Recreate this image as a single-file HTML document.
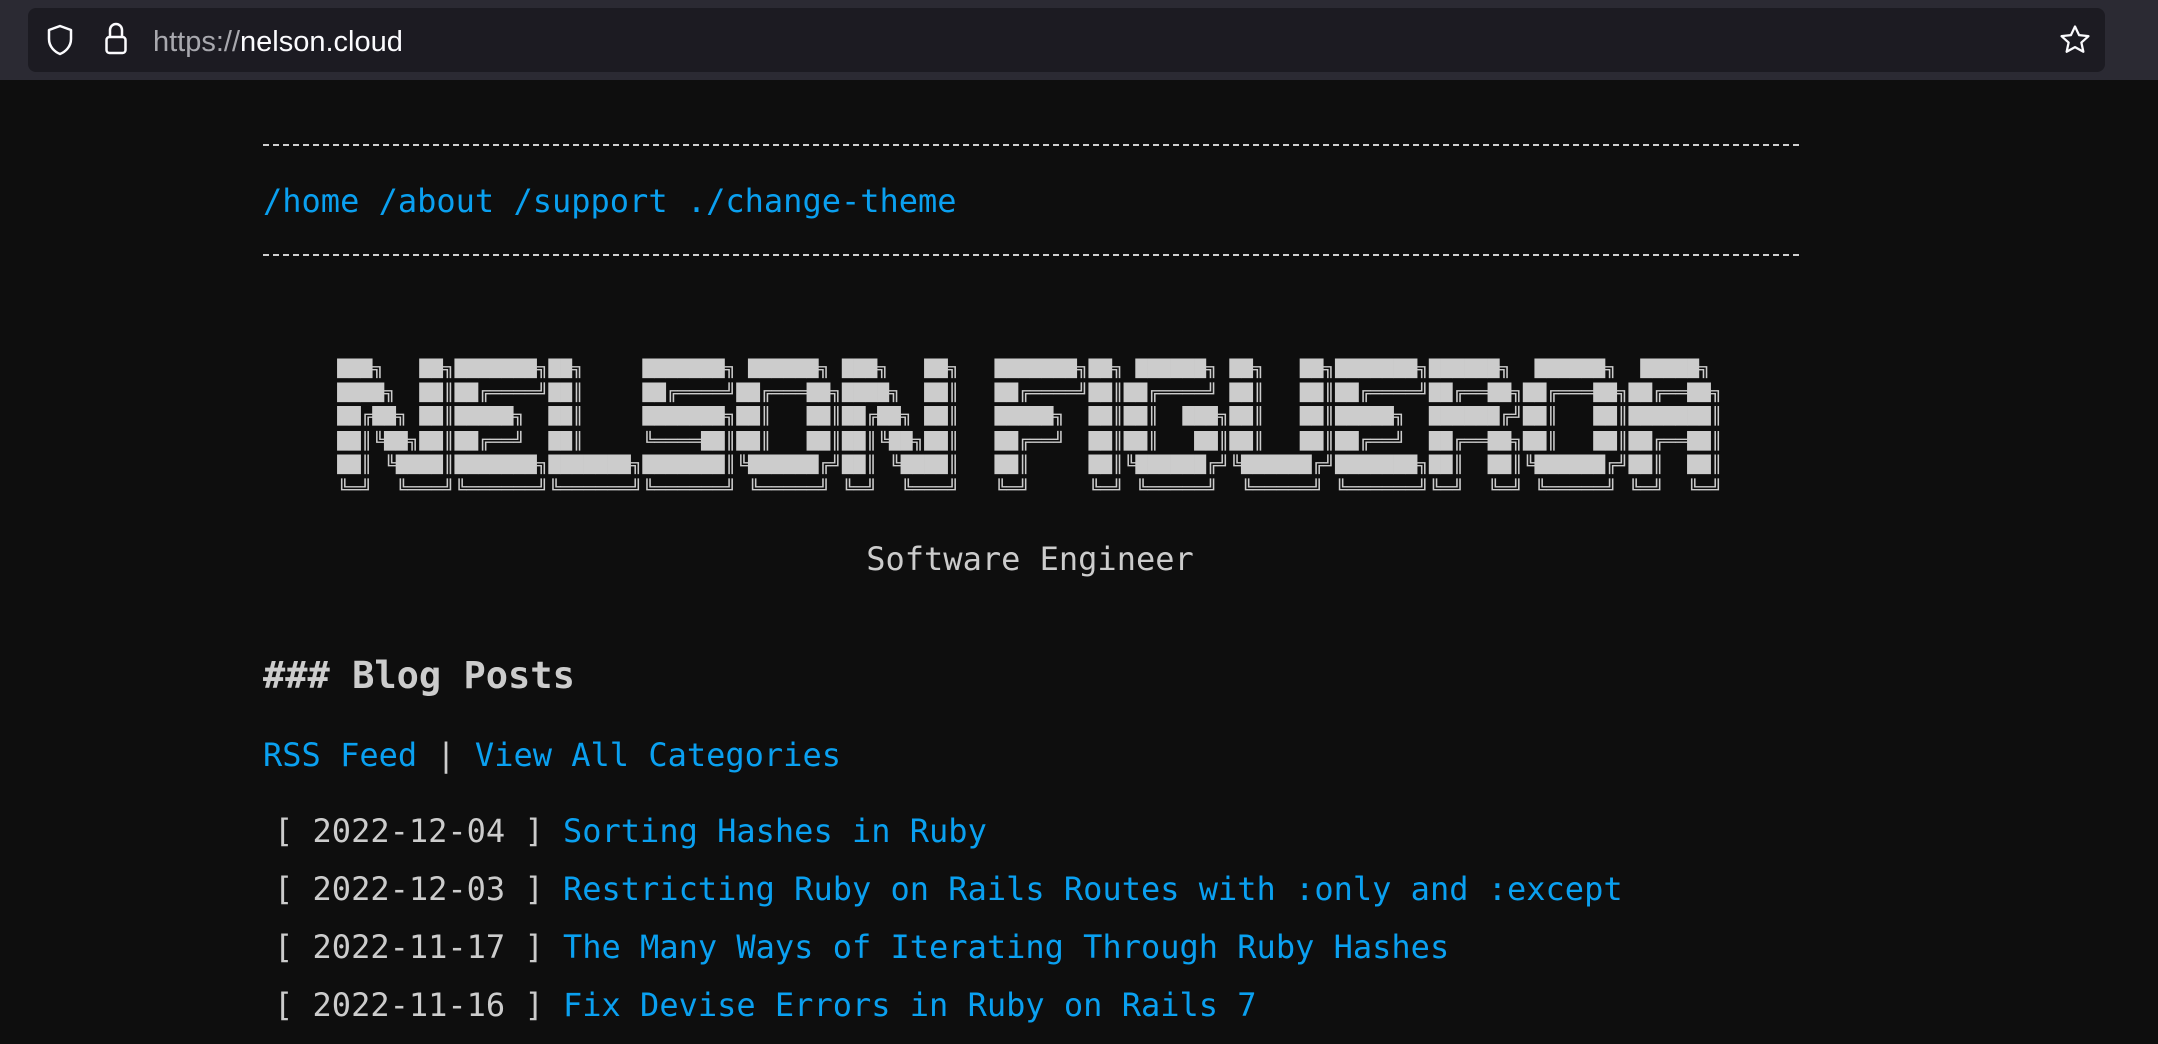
<!DOCTYPE html>
<html><head><meta charset="utf-8"><style>
html,body{margin:0;padding:0;width:2158px;height:1044px;overflow:hidden;background:#0e0e0e;font-family:"DejaVu Sans Mono","Liberation Mono",monospace;color:#cccccc}
.top{position:absolute;left:0;top:0;width:2158px;height:80px;background:#2b2a33}
.url{position:absolute;left:28px;top:8px;width:2077px;height:64px;background:#1c1b22;border-radius:8px}
.urltxt{position:absolute;left:125px;top:18px;font-family:"Liberation Sans",sans-serif;font-size:29px;color:#fbfbfe}
.urltxt span{color:#a8a8ae}
.dash{position:absolute;left:263px;width:1536px;border-top:2px dashed #cfcfcf}
.a{color:#0aa0f0}
.abs{position:absolute;font-size:32px;line-height:40px;white-space:pre}
pre.banner{position:absolute;left:0;width:2060px;text-align:center;top:357px;margin:0;font-family:"DejaVu Sans Mono",monospace;font-size:19.5px;line-height:28.2px;color:#cccccc;transform:scaleY(0.85);transform-origin:top}
</style></head><body>
<div class="top"><div class="url">
<svg style="position:absolute;left:17px;top:15px" width="30" height="34" viewBox="0 0 30 34"><path d="M15 3 L26 7 V16 C26 24 20 29 15 31 C10 29 4 24 4 16 V7 Z" fill="none" stroke="#fbfbfe" stroke-width="2.5" stroke-linejoin="round"/></svg>
<svg style="position:absolute;left:75px;top:12px" width="26" height="38" viewBox="0 0 26 38"><path d="M7 17 V10 A6 6 0 0 1 19 10 V17" fill="none" stroke="#fbfbfe" stroke-width="2.5"/><rect x="3.5" y="17" width="19" height="16" rx="3" fill="none" stroke="#fbfbfe" stroke-width="2.5"/></svg>
<div class="urltxt"><span>https://</span>nelson.cloud</div>
<svg style="position:absolute;left:2030px;top:15px" width="34" height="34" viewBox="0 0 24 24"><path d="M12 2.5 L14.9 8.6 L21.5 9.3 L16.5 13.8 L17.9 20.3 L12 17 L6.1 20.3 L7.5 13.8 L2.5 9.3 L9.1 8.6 Z" fill="none" stroke="#fbfbfe" stroke-width="1.6" stroke-linejoin="round"/></svg>
</div></div>
<div class="dash" style="top:144px"></div>
<div class="abs a" style="left:263px;top:181px">/home /about /support ./change-theme</div>
<div class="dash" style="top:254px"></div>
<pre class="banner">███╗   ██╗███████╗██╗     ███████╗ ██████╗ ███╗   ██╗   ███████╗██╗ ██████╗ ██╗   ██╗███████╗██████╗  ██████╗  █████╗ 
████╗  ██║██╔════╝██║     ██╔════╝██╔═══██╗████╗  ██║   ██╔════╝██║██╔════╝ ██║   ██║██╔════╝██╔══██╗██╔═══██╗██╔══██╗
██╔██╗ ██║█████╗  ██║     ███████╗██║   ██║██╔██╗ ██║   █████╗  ██║██║  ███╗██║   ██║█████╗  ██████╔╝██║   ██║███████║
██║╚██╗██║██╔══╝  ██║     ╚════██║██║   ██║██║╚██╗██║   ██╔══╝  ██║██║   ██║██║   ██║██╔══╝  ██╔══██╗██║   ██║██╔══██║
██║ ╚████║███████╗███████╗███████║╚██████╔╝██║ ╚████║   ██║     ██║╚██████╔╝╚██████╔╝███████╗██║  ██║╚██████╔╝██║  ██║
╚═╝  ╚═══╝╚══════╝╚══════╝╚══════╝ ╚═════╝ ╚═╝  ╚═══╝   ╚═╝     ╚═╝ ╚═════╝  ╚═════╝ ╚══════╝╚═╝  ╚═╝ ╚═════╝ ╚═╝  ╚═╝</pre>
<div class="abs" style="left:0;width:2060px;text-align:center;top:539px">Software Engineer</div>
<div class="abs" style="left:263px;top:654px;font-weight:bold;font-size:37px;line-height:44px">### Blog Posts</div>
<div class="abs" style="left:263px;top:735px"><span class="a">RSS Feed</span> | <span class="a">View All Categories</span></div>
<div class="abs" style="left:274px;top:811px">[ 2022-12-04 ] <span class="a">Sorting Hashes in Ruby</span></div>
<div class="abs" style="left:274px;top:869px">[ 2022-12-03 ] <span class="a">Restricting Ruby on Rails Routes with :only and :except</span></div>
<div class="abs" style="left:274px;top:927px">[ 2022-11-17 ] <span class="a">The Many Ways of Iterating Through Ruby Hashes</span></div>
<div class="abs" style="left:274px;top:985px">[ 2022-11-16 ] <span class="a">Fix Devise Errors in Ruby on Rails 7</span></div>
</body></html>
